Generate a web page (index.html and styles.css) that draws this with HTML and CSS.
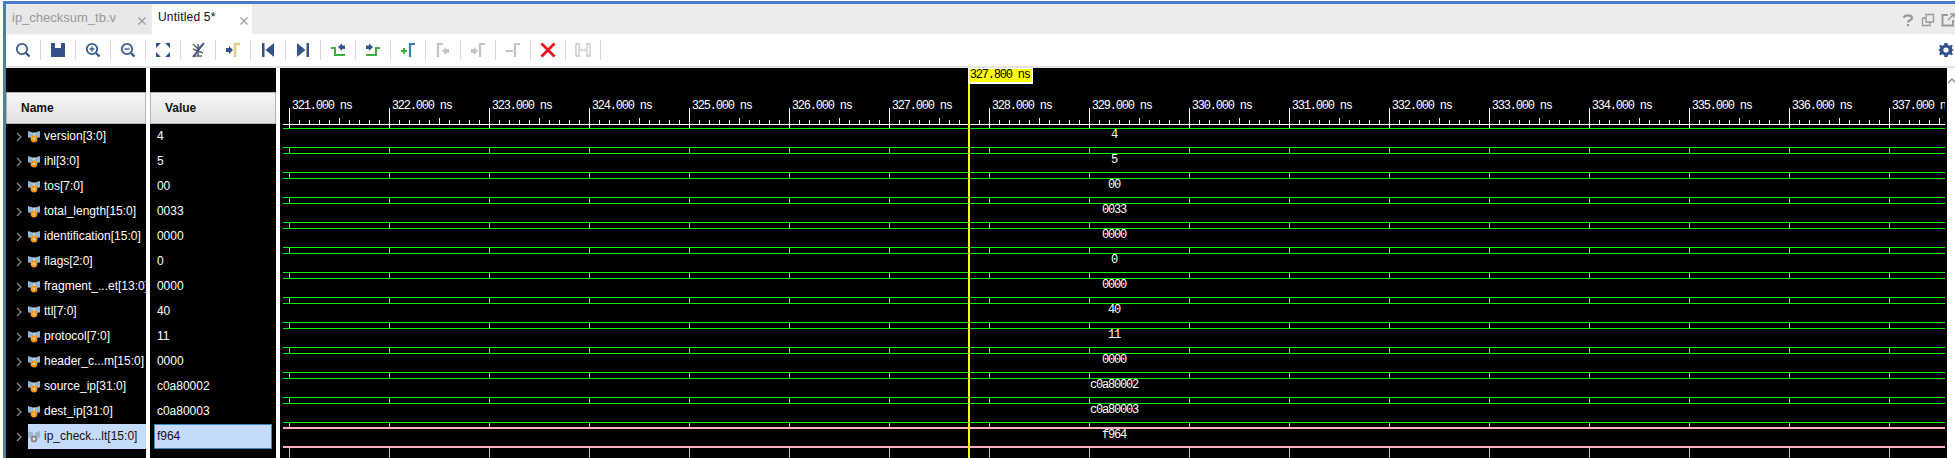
FILE: index.html
```html
<!DOCTYPE html>
<html lang="en">
<head>
    <meta charset="UTF-8">
    <meta name="viewport" content="width=device-width, initial-scale=1.0">
    <title>Untitled 5*</title>
    <link rel="stylesheet" href="styles.css">
</head>
<body>
<svg class="defs" width="0" height="0">
    <symbol id="bus" viewBox="0 0 12 12">
        <path d="M0 0 L5 1.5 V7 L0 6.5Z M12 0 L7 1.5 V7 L12 6.5Z" fill="#8fb6d3"/>
        <path d="M5 1.5 H7 V6 H5Z" fill="#c9d6de"/>
        <circle cx="6" cy="8" r="3.4" fill="#f29a21"/>
        <circle cx="6" cy="8" r="1.2" fill="#fbd08c"/>
    </symbol>
    <symbol id="bus-grey" viewBox="0 0 12 12">
        <path d="M0 0 L5 1.5 V7 L0 6.5Z M12 0 L7 1.5 V7 L12 6.5Z" fill="#9bb6cf"/>
        <circle cx="6" cy="8" r="3.4" fill="#8a8a8a"/>
        <circle cx="6" cy="8" r="1.4" fill="#e6e6e6"/>
    </symbol>
    <symbol id="chev" viewBox="0 0 6 10">
        <path d="M1 1 L5 5 L1 9" fill="none" stroke="#8a8a8a" stroke-width="1.2"/>
    </symbol>
    <symbol id="tab-close" viewBox="0 0 8 8">
        <path d="M0.5 0.5 L7.5 7.5 M7.5 0.5 L0.5 7.5" stroke="#9a9a9a" stroke-width="1.2"/>
    </symbol>
</svg>

<div class="window">
    <div class="tabbar">
        <div class="tab">ip_checksum_tb.v<svg class="tab-x"><use href="#tab-close"/></svg></div>
        <div class="tab active">Untitled 5*<svg class="tab-x"><use href="#tab-close"/></svg></div>
        <div class="tab-tools">
            <svg width="14" height="14" viewBox="0 0 14 14"><path d="M3 5 C3 1.5 11 1.5 11 5 C11 7.5 7 7 7 9.5" fill="none" stroke="#999" stroke-width="2.2"/><rect x="6" y="11" width="2.2" height="2.2" fill="#999"/></svg>
            <svg width="14" height="14" viewBox="0 0 14 14"><path d="M5 1.5 H12.5 V9 H5Z M1.5 5 H5 M1.5 5 V12.5 H9 V9" fill="none" stroke="#999" stroke-width="1.3"/></svg>
            <svg width="14" height="14" viewBox="0 0 14 14"><path d="M7 2 H1.5 V12.5 H12 V7" fill="none" stroke="#999" stroke-width="2"/><path d="M7 7 L13 1 M9 1 H13 V5" fill="none" stroke="#999" stroke-width="1.4"/></svg>
        </div>
    </div>

    <div class="toolbar">
        <span class="tool"><svg width="16" height="16" viewBox="0 0 16 16"><circle cx="7" cy="7" r="5.2" fill="none" stroke="#3a5a8c" stroke-width="1.8"/><path d="M11 11 L14.5 14.5" stroke="#3a5a8c" stroke-width="2.4"/></svg></span>
        <span class="tool"><svg width="16" height="16" viewBox="0 0 16 16"><path d="M1 1 H15 V15 H1Z" fill="#34528a"/><path d="M5 1 H11 V6 H5Z" fill="#fff"/></svg></span>
        <span class="tool"><svg width="16" height="16" viewBox="0 0 16 16"><circle cx="7" cy="7" r="5.2" fill="none" stroke="#3a5a8c" stroke-width="1.8"/><path d="M11 11 L14.5 14.5" stroke="#3a5a8c" stroke-width="2.4"/><path d="M4.5 7 H9.5 M7 4.5 V9.5" stroke="#3a5a8c" stroke-width="1.4"/></svg></span>
        <span class="tool"><svg width="16" height="16" viewBox="0 0 16 16"><circle cx="7" cy="7" r="5.2" fill="none" stroke="#3a5a8c" stroke-width="1.8"/><path d="M11 11 L14.5 14.5" stroke="#3a5a8c" stroke-width="2.4"/><path d="M4.5 7 H9.5" stroke="#3a5a8c" stroke-width="1.4"/></svg></span>
        <span class="tool"><svg width="16" height="16" viewBox="0 0 16 16"><path d="M1 1 H6 L1 6Z M15 1 H10 L15 6Z M1 15 H6 L1 10Z M15 15 H10 L15 10Z" fill="#34528a"/></svg></span>
        <span class="tool"><svg width="16" height="16" viewBox="0 0 16 16"><path d="M3 2 L8 7 L13 2 M8 2 V14 M4 14 H12 M3 7 L13 11" fill="none" stroke="#666" stroke-width="1.5"/><path d="M14 1 L3 15" stroke="#34528a" stroke-width="1.8"/></svg></span>
        <span class="tool"><svg width="16" height="16" viewBox="0 0 16 16"><path d="M10 15 V2 H15" fill="none" stroke="#e3cf82" stroke-width="2.6"/><path d="M1 6 H4 V4 L8 8 L4 12 V10 H1Z" fill="#34528a"/></svg></span>
        <span class="tool"><svg width="16" height="16" viewBox="0 0 16 16"><path d="M2 1 H4.5 V15 H2Z M14 1 V15 L5.5 8Z" fill="#34528a"/></svg></span>
        <span class="tool"><svg width="16" height="16" viewBox="0 0 16 16"><path d="M14 1 H11.5 V15 H14Z M2 1 V15 L10.5 8Z" fill="#34528a"/></svg></span>
        <span class="tool"><svg width="16" height="16" viewBox="0 0 16 16"><path d="M1 6 H5 V13 H15" fill="none" stroke="#3cae3c" stroke-width="2"/><path d="M8 5 L12 1.5 V3.5 H15 V7 H12 V9Z" fill="#34528a"/></svg></span>
        <span class="tool"><svg width="16" height="16" viewBox="0 0 16 16"><path d="M1 13 H11 V6 H15" fill="none" stroke="#3cae3c" stroke-width="2"/><path d="M8 5 L4 1.5 V3.5 H1 V7 H4 V9Z" fill="#34528a"/></svg></span>
        <span class="tool"><svg width="16" height="16" viewBox="0 0 16 16"><path d="M1 9 H7 M4 6 V12" stroke="#3cae3c" stroke-width="2"/><path d="M10 15 V2 H15" fill="none" stroke="#3a7fb8" stroke-width="2.2"/></svg></span>
        <span class="tool"><svg width="16" height="16" viewBox="0 0 16 16"><path d="M3 15 V2 H8" fill="none" stroke="#c4c4c4" stroke-width="2.2"/><path d="M14 7 H11 V5 L7 9 L11 13 V11 H14Z" fill="#c4c4c4"/></svg></span>
        <span class="tool"><svg width="16" height="16" viewBox="0 0 16 16"><path d="M10 15 V2 H15" fill="none" stroke="#c4c4c4" stroke-width="2.2"/><path d="M1 7 H4 V5 L8 9 L4 13 V11 H1Z" fill="#c4c4c4"/></svg></span>
        <span class="tool"><svg width="16" height="16" viewBox="0 0 16 16"><path d="M1 9 H8" stroke="#c4c4c4" stroke-width="2"/><path d="M10 15 V2 H15" fill="none" stroke="#c4c4c4" stroke-width="2.2"/></svg></span>
        <span class="tool"><svg width="16" height="16" viewBox="0 0 16 16"><path d="M1.5 1.5 L14.5 14.5 M14.5 1.5 L1.5 14.5" stroke="#e8131a" stroke-width="2.8"/></svg></span>
        <span class="tool"><svg width="16" height="16" viewBox="0 0 16 16"><path d="M1 2 H4 V14 H1Z M12 2 H15 V14 H12Z" fill="none" stroke="#c8c8c8" stroke-width="1.4"/><path d="M5 8 H11 M6.5 6.5 L5 8 L6.5 9.5 M9.5 6.5 L11 8 L9.5 9.5" fill="none" stroke="#c8c8c8"/></svg></span>
        <span class="toolbar-gear"><svg width="16" height="16" viewBox="0 0 16 16"><path d="M6.5 1 L9.5 1 L10 3 L12 3.8 L13.7 2.8 L14.8 4 L13.8 5.8 L14.5 7.3 L16 8 L14.5 8.7 L13.8 10.2 L14.8 12 L13.7 13.2 L12 12.2 L10 13 L9.5 15 L6.5 15 L6 13 L4 12.2 L2.3 13.2 L1.2 12 L2.2 10.2 L1.5 8.7 L0 8 L1.5 7.3 L2.2 5.8 L1.2 4 L2.3 2.8 L4 3.8 L6 3Z" fill="#34528a"/><circle cx="8" cy="8" r="2.6" fill="#fff"/></svg></span>
    </div>

    <div class="panes">
        <div class="col name-col">
            <div class="col-top"></div>
            <div class="col-head">Name</div>
            <div class="sig"><svg class="chev"><use href="#chev"/></svg><svg class="ico"><use href="#bus"/></svg><span class="sig-name">version[3:0]</span></div>
            <div class="sig"><svg class="chev"><use href="#chev"/></svg><svg class="ico"><use href="#bus"/></svg><span class="sig-name">ihl[3:0]</span></div>
            <div class="sig"><svg class="chev"><use href="#chev"/></svg><svg class="ico"><use href="#bus"/></svg><span class="sig-name">tos[7:0]</span></div>
            <div class="sig"><svg class="chev"><use href="#chev"/></svg><svg class="ico"><use href="#bus"/></svg><span class="sig-name">total_length[15:0]</span></div>
            <div class="sig"><svg class="chev"><use href="#chev"/></svg><svg class="ico"><use href="#bus"/></svg><span class="sig-name">identification[15:0]</span></div>
            <div class="sig"><svg class="chev"><use href="#chev"/></svg><svg class="ico"><use href="#bus"/></svg><span class="sig-name">flags[2:0]</span></div>
            <div class="sig"><svg class="chev"><use href="#chev"/></svg><svg class="ico"><use href="#bus"/></svg><span class="sig-name">fragment_...et[13:0]</span></div>
            <div class="sig"><svg class="chev"><use href="#chev"/></svg><svg class="ico"><use href="#bus"/></svg><span class="sig-name">ttl[7:0]</span></div>
            <div class="sig"><svg class="chev"><use href="#chev"/></svg><svg class="ico"><use href="#bus"/></svg><span class="sig-name">protocol[7:0]</span></div>
            <div class="sig"><svg class="chev"><use href="#chev"/></svg><svg class="ico"><use href="#bus"/></svg><span class="sig-name">header_c...m[15:0]</span></div>
            <div class="sig"><svg class="chev"><use href="#chev"/></svg><svg class="ico"><use href="#bus"/></svg><span class="sig-name">source_ip[31:0]</span></div>
            <div class="sig"><svg class="chev"><use href="#chev"/></svg><svg class="ico"><use href="#bus"/></svg><span class="sig-name">dest_ip[31:0]</span></div>
            <div class="sig selected"><svg class="chev"><use href="#chev"/></svg><div class="sel-box"><svg class="ico"><use href="#bus-grey"/></svg><span class="sig-name">ip_check...lt[15:0]</span></div></div>
        </div>

        <div class="col value-col">
            <div class="col-top"></div>
            <div class="col-head">Value</div>
            <div class="val">4</div>
            <div class="val">5</div>
            <div class="val">00</div>
            <div class="val">0033</div>
            <div class="val">0000</div>
            <div class="val">0</div>
            <div class="val">0000</div>
            <div class="val">40</div>
            <div class="val">11</div>
            <div class="val">0000</div>
            <div class="val">c0a80002</div>
            <div class="val">c0a80003</div>
            <div class="val selected">f964</div>
        </div>

        <div class="wave">
            <div class="ruler">
                <div class="mark"><span>321.000 ns</span></div>
                <div class="mark"><span>322.000 ns</span></div>
                <div class="mark"><span>323.000 ns</span></div>
                <div class="mark"><span>324.000 ns</span></div>
                <div class="mark"><span>325.000 ns</span></div>
                <div class="mark"><span>326.000 ns</span></div>
                <div class="mark"><span>327.000 ns</span></div>
                <div class="mark"><span>328.000 ns</span></div>
                <div class="mark"><span>329.000 ns</span></div>
                <div class="mark"><span>330.000 ns</span></div>
                <div class="mark"><span>331.000 ns</span></div>
                <div class="mark"><span>332.000 ns</span></div>
                <div class="mark"><span>333.000 ns</span></div>
                <div class="mark"><span>334.000 ns</span></div>
                <div class="mark"><span>335.000 ns</span></div>
                <div class="mark"><span>336.000 ns</span></div>
                <div class="mark"><span>337.000 ns</span></div>
            </div>
            <div class="track">
                <div class="bus">4</div>
                <div class="bus">5</div>
                <div class="bus">00</div>
                <div class="bus">0033</div>
                <div class="bus">0000</div>
                <div class="bus">0</div>
                <div class="bus">0000</div>
                <div class="bus">40</div>
                <div class="bus">11</div>
                <div class="bus">0000</div>
                <div class="bus">c0a80002</div>
                <div class="bus">c0a80003</div>
                <div class="bus pink">f964</div>
            </div>
            <div class="cursor"><div class="cursor-label">327.800 ns</div></div>
        </div>

        <div class="scrollbar">
            <svg width="7" height="6" viewBox="0 0 7 6"><path d="M0 5 L4 1 L7 4" fill="none" stroke="#8a8a8a" stroke-width="1.4"/></svg>
        </div>
    </div>
</div>
</body>
</html>
```

FILE: styles.css
```css
html, body {
    margin: 0;
    height: 100%;
    background: #fff;
    overflow: hidden;
}
.defs {
    position: absolute;
}
.window {
    margin-left: 3px;
    height: 457px;
    margin-top: 1px;
    border-top: 3px solid #4a7ac8;
    border-left: 3px solid #4a7ac8;
    font-family: "Liberation Sans", Arial, sans-serif;
    font-size: 12px;
    display: flex;
    flex-direction: column;
}

/* tabs */
.tabbar {
    height: 30px;
    background: #ececec;
    display: flex;
}
.tab {
    width: 144px;
    box-sizing: border-box;
    padding-left: 6px;
    line-height: 27px;
    color: #989898;
    font-size: 13px;
    background: #e8e8e8;
    margin-right: 2px;
    position: relative;
}
.tab.active {
    width: 100px;
    color: #111;
    background: #fff;
    font-size: 12px;
    letter-spacing: 0.2px;
}
.tab-x {
    position: absolute;
    right: 4px;
    top: 13px;
    width: 8px;
    height: 8px;
}
.tab-tools {
    margin-left: auto;
    display: flex;
    gap: 6px;
    padding-top: 9px;
}

/* toolbar */
.toolbar {
    height: 32px;
    background: #fff;
    border-bottom: 2px solid #e4e4e4;
    display: flex;
    align-items: center;
}
.tool {
    width: 35px;
    height: 20px;
    box-sizing: border-box;
    border-right: 1px solid #d8d8d8;
    display: flex;
    align-items: center;
    justify-content: center;
}
.toolbar-gear {
    margin-left: auto;
    margin-right: 1px;
    display: flex;
}

/* signal columns */
.panes {
    flex: 1;
    display: flex;
    min-height: 0;
}
.col {
    background: #000;
    color: #fff;
}
.name-col {
    width: 140px;
    margin-right: 4px;
    overflow: hidden;
}
.value-col {
    width: 126px;
    margin-right: 4px;
}
.col-top {
    height: 24px;
}
.col-head {
    height: 32px;
    box-sizing: border-box;
    border: 1px solid #b4b4b4;
    background: linear-gradient(#f6f6f6, #e2e2e2);
    color: #111;
    font-weight: bold;
    line-height: 30px;
    padding-left: 14px;
}
.sig, .val {
    height: 25px;
    line-height: 25px;
    display: flex;
    align-items: center;
    white-space: nowrap;
}
.val {
    padding-left: 7px;
}
.val.selected {
    margin: 0 4px;
    padding-left: 2px;
    box-sizing: border-box;
    background: #c5dbfb;
    border: 1px solid #3b8ac4;
    color: #111;
}
.chev {
    width: 6px;
    height: 10px;
    margin-left: 10px;
    flex: none;
}
.ico {
    width: 12px;
    height: 12px;
    margin-left: 6px;
    flex: none;
}
.sig-name {
    margin-left: 4px;
}
.sel-box {
    margin-left: 6px;
    flex: 1;
    height: 25px;
    display: flex;
    align-items: center;
    background: #c5dbfb;
    color: #111;
}
.sel-box .ico {
    margin-left: 0;
}

/* waveform */
.wave {
    width: 1668px;
    background: #000;
    position: relative;
    padding: 0 2px 0 3px;
    box-sizing: border-box;
    overflow: hidden;
    font-family: "Liberation Mono", monospace;
    font-size: 12px;
    letter-spacing: -1.2px;
    color: #fff;
}
.ruler {
    height: 60px;
    box-sizing: border-box;
    padding: 40px 0 0 6px;
    display: flex;
    overflow: hidden;
    background-image:
        linear-gradient(#fff, #fff),
        repeating-linear-gradient(90deg, #fff 0 1px, transparent 1px 100px),
        repeating-linear-gradient(90deg, #fff 0 1px, transparent 1px 10px);
    background-size: 100% 1px, 100% 6px, 100% 4px;
    background-position: 0 56px, 56px 50px, 6px 52px;
    background-repeat: no-repeat;
}
.mark {
    flex: 0 0 100px;
    box-sizing: border-box;
    border-left: 1px solid #fff;
    padding-left: 2px;
    white-space: nowrap;
}
.mark span {
    display: block;
    line-height: 12px;
    margin-top: -8px;
}
.track {
    height: 330px;
    background: repeating-linear-gradient(90deg, #bbb 0 1px, transparent 1px 100px) 6px 0;
}
.bus {
    height: 20px;
    box-sizing: border-box;
    margin-bottom: 5px;
    border-top: 1px solid #10f010;
    border-bottom: 1px solid #10f010;
    background: #000;
    text-align: center;
    line-height: 13px;
}
.bus.pink {
    height: 21px;
    margin-top: -1px;
    border-top: 2px solid #ffb0bc;
    border-bottom: 2px solid #ffb0bc;
    line-height: 12px;
}
.cursor {
    position: absolute;
    left: 688px;
    top: 16px;
    bottom: 0;
    width: 2px;
    background: #ffff00;
}
.cursor-label {
    position: absolute;
    top: -16px;
    left: 0;
    width: 65px;
    height: 16px;
    box-sizing: border-box;
    border: 1px solid #fff;
    border-bottom-width: 2px;
    background: #ffff00;
    color: #000;
    line-height: 13px;
    padding-left: 1px;
    white-space: nowrap;
}
.scrollbar {
    flex: 1;
    padding-top: 5px;
    padding-left: 1px;
}
```
